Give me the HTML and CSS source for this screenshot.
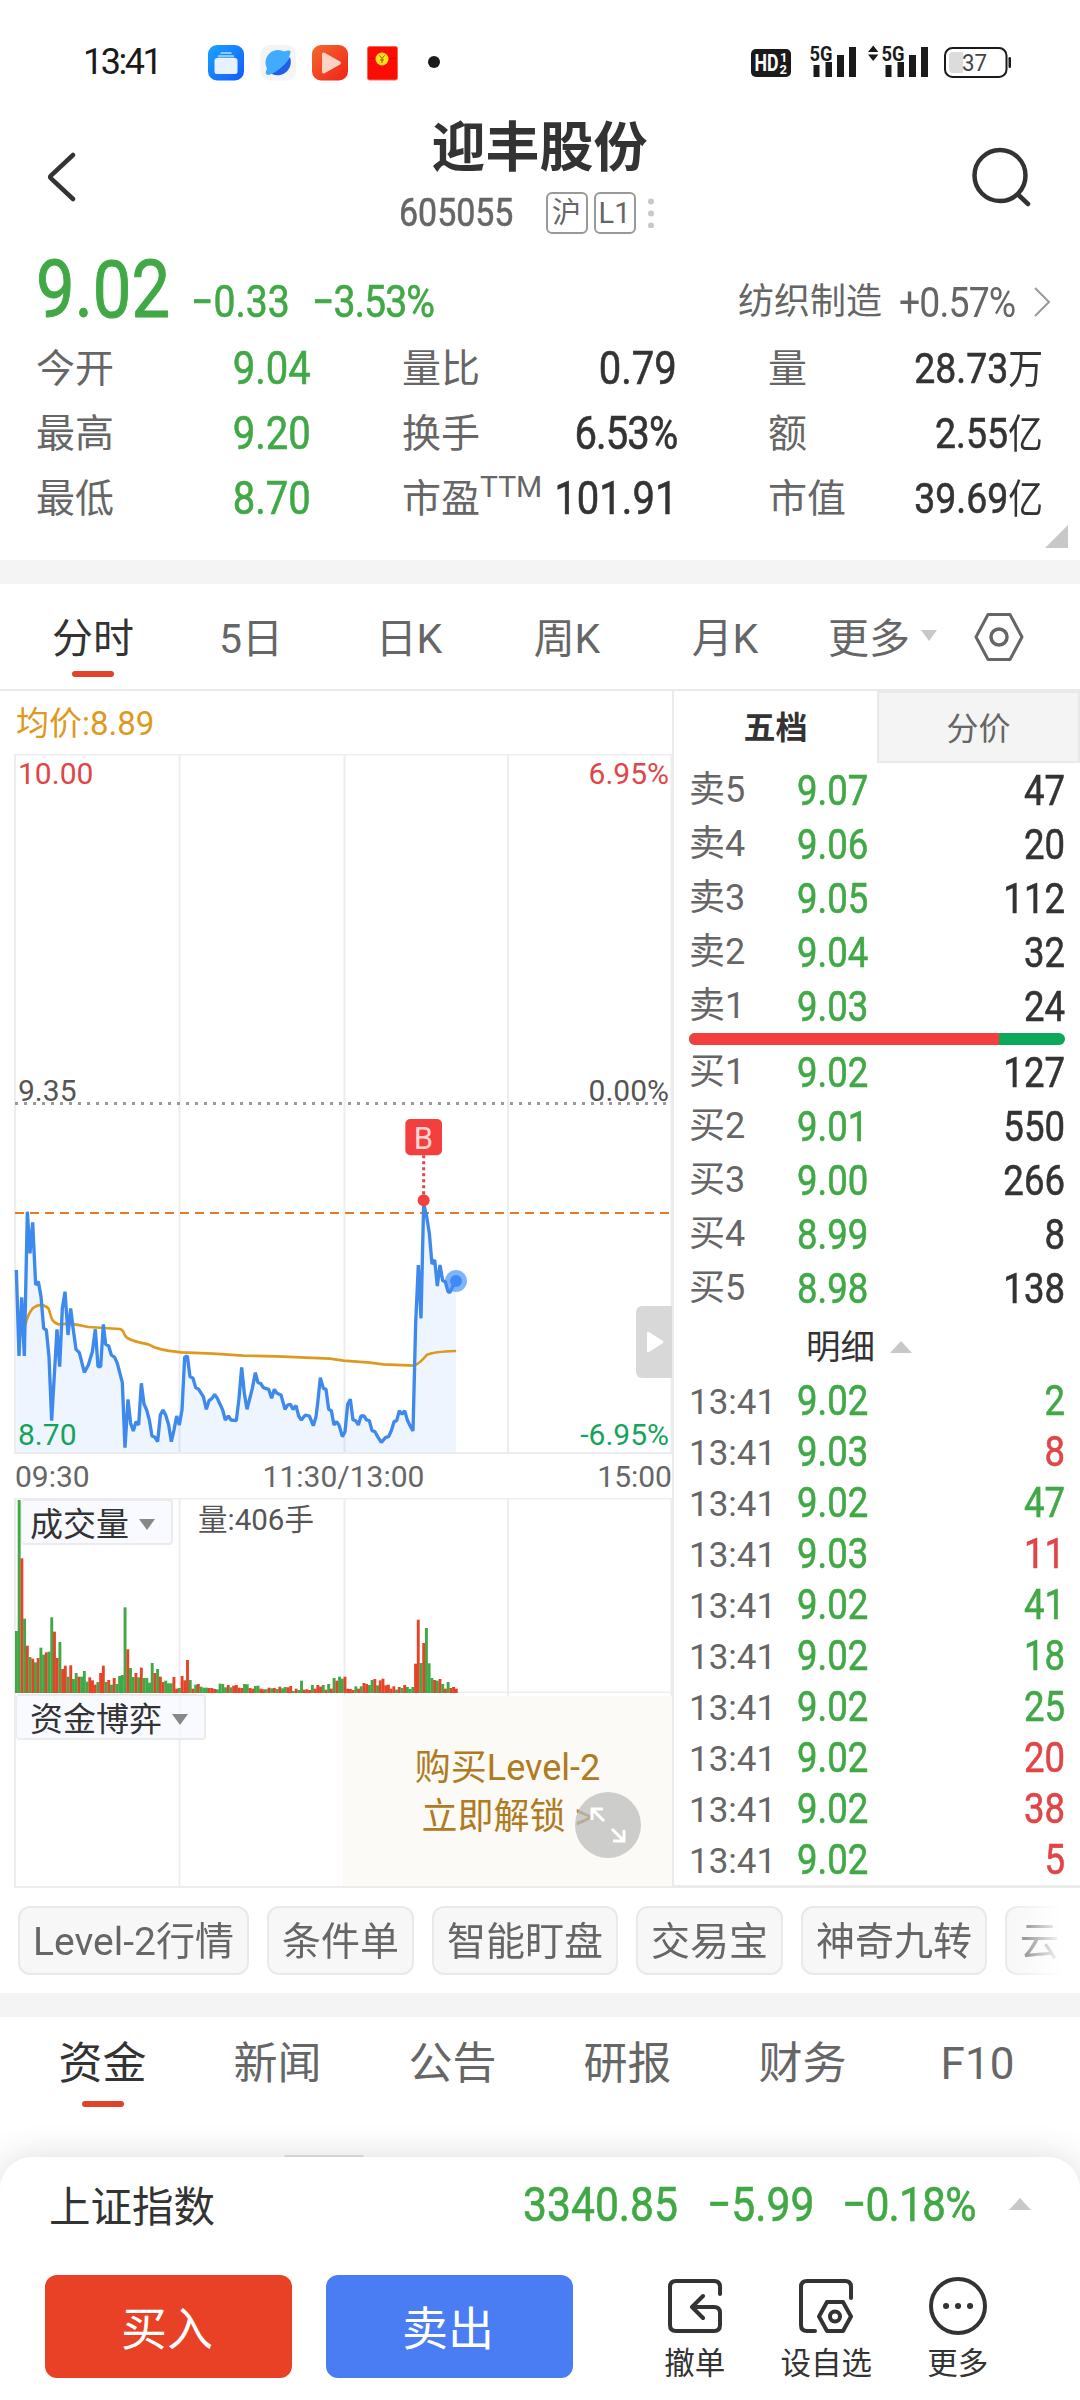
FILE: index.html
```html
<!DOCTYPE html>
<html lang="zh-CN">
  <head>
    <meta charset="UTF-8" />
    <meta name="viewport" content="width=device-width, initial-scale=1.0" />
    <title>迎丰股份 605055</title>
    <link rel="stylesheet" href="styles.css" />
  </head>
  <body>
    <!-- 状态栏 -->
    <div class="status-bar">
      <span class="clock">13:41</span>
      <svg class="app-icons" width="232" height="40" viewBox="208 42 232 40">
        <defs>
          <linearGradient id="blue" x1="0" y1="0" x2="1" y2="1">
            <stop offset="0" stop-color="#19a5ff" />
            <stop offset="1" stop-color="#1458ff" />
          </linearGradient>
          <linearGradient id="orange" x1="0" y1="0" x2="1" y2="1">
            <stop offset="0" stop-color="#f5692e" />
            <stop offset="1" stop-color="#f02218" />
          </linearGradient>
        </defs>
        <rect x="208" y="45" width="36" height="35.500" rx="9" fill="url(#blue)" />
        <path d="M221 52h10l1 2h-12zM218.500 55h15l1 2.500h-17z" fill="#8fc8ff" />
        <rect x="214.500" y="58" width="23" height="16" rx="2.500" fill="#e8f1ff" />
        <rect x="260.500" y="45" width="35.500" height="35.500" rx="9" fill="#f4f4f5" />
        <circle cx="278" cy="62.500" r="12.500" fill="#41acff" />
        <path d="M290 57c2 6 0 13-6 16.500-5 3-11 2-14-1 9-2 16-8 20-15.500z" fill="#205fe8" />
        <path d="M283 52c4-2 8-2 7.500 0-.5 8-13 21-22 23-4 0-3-4-1-7z" fill="#41acff" />
        <rect x="312" y="45" width="36" height="35.500" rx="9" fill="url(#orange)" />
        <path d="M322 54.500q0-3 3-1.500l15 8.500q2 1.500 0 3l-15 8.500q-3 1.500-3-1.500z" fill="#ffd2c8" />
        <rect x="367.500" y="46.500" width="30" height="33.500" rx="2" fill="#fb0d05" stroke="#f76b4c" />
        <path d="M369 58q13 3 27 0" fill="none" stroke="#d80000" />
        <circle cx="382" cy="59" r="6.500" fill="#ffe11b" />
        <path d="M379.500 55.500l2.500 3 2.500-3M382 58.500v4.500M380 60h4" fill="none" stroke="#a05a00" />
        <circle cx="434" cy="62" r="6" fill="#1a1a1a" />
      </svg>
      <svg class="sys-icons" width="262" height="40" viewBox="750 42 262 40" fill="#1a1a1a">
        <rect x="751" y="49" width="40" height="28" rx="5" />
        <text class="hd" x="754.500" y="71" textLength="24" lengthAdjust="spacingAndGlyphs">HD</text>
        <text class="hd-sub" x="780" y="61.500">1</text>
        <text class="hd-sub" x="779.500" y="74">2</text>
        <text class="net" x="809.500" y="60.500" textLength="23" lengthAdjust="spacingAndGlyphs">5G</text>
        <path d="M813.500 65h6v12h-6zM825.500 62h6.500v15h-6.500zM837 55h7v22h-7zM849 47h7v30h-7z" />
        <path d="M868 52l5.200-6.500 5.200 6.500zM868 54.500l5.200 6.500 5.200-6.500z" />
        <text class="net" x="881.500" y="60.500" textLength="23" lengthAdjust="spacingAndGlyphs">5G</text>
        <path d="M885.500 65h6v12h-6zM897.500 62h6.500v15h-6.500zM909 55h7v22h-7zM921 47h7v30h-7z" />
        <rect x="945" y="48" width="61.500" height="29" rx="7.500" fill="#fff" stroke="#1a1a1a" stroke-width="2" />
        <path d="M953 52h10v21h-10q-4 0-4-4v-13q0-4 4-4z" fill="#dcdcdc" />
        <rect x="1008.500" y="57" width="2.500" height="11" rx="1.200" />
        <text class="battery" x="962" y="71" textLength="25" lengthAdjust="spacingAndGlyphs">37</text>
      </svg>
    </div>

    <!-- 标题 -->
    <header class="header">
      <svg class="back" width="30" height="50" viewBox="0 0 30 50">
        <path d="M26 3L4 23.500q-1.500 1.500 0 3L26 47" />
      </svg>
      <div class="title">
        <h1>迎丰股份</h1>
        <div class="sub-title">
          <span class="num code">605055</span>
          <span class="badge">沪</span>
          <span class="badge">L1</span>
          <svg width="8" height="30" viewBox="0 0 8 30" fill="#c8c8c8">
            <circle cx="4" cy="3.500" r="3" />
            <circle cx="4" cy="15.500" r="3" />
            <circle cx="4" cy="27.500" r="3" />
          </svg>
        </div>
      </div>
      <svg class="search" width="60" height="60" viewBox="972 147 60 60">
        <circle cx="1001" cy="175.500" r="25.500" />
        <path d="M1019 194.500l10 9.500" />
      </svg>
    </header>

    <!-- 行情 -->
    <section class="quote">
      <div class="price-row">
        <span class="num price">9.02</span>
        <span class="num change">−0.33</span>
        <span class="num change percent">−3.53%</span>
        <div class="industry">
          纺织制造 <span class="num percent">+0.57%</span>
          <svg width="18" height="32" viewBox="0 0 18 32">
            <path d="M2 2l14 14L2 30" fill="none" stroke="#999" stroke-width="2" />
          </svg>
        </div>
      </div>
      <div class="stats">
        <div class="stat"><span>今开</span><b class="num green">9.04</b></div>
        <div class="stat"><span>量比</span><b class="num">0.79</b></div>
        <div class="stat last"><span>量</span><b class="num small">28.73<i>万</i></b></div>
        <div class="stat"><span>最高</span><b class="num green">9.20</b></div>
        <div class="stat"><span>换手</span><b class="num percent">6.53%</b></div>
        <div class="stat last"><span>额</span><b class="num small">2.55<i>亿</i></b></div>
        <div class="stat"><span>最低</span><b class="num green">8.70</b></div>
        <div class="stat"><span class="pe">市盈<sup>TTM</sup></span><b class="num">101.91</b></div>
        <div class="stat last"><span>市值</span><b class="num small">39.69<i>亿</i></b></div>
      </div>
      <div class="corner"></div>
    </section>

    <!-- 周期切换 -->
    <nav class="period-tabs">
      <span class="active">分时</span>
      <span>5日</span>
      <span>日K</span>
      <span>周K</span>
      <span>月K</span>
      <span class="more">更多<i class="arrow-down"></i></span>
      <svg width="50" height="50" viewBox="0 0 50 50" fill="none" stroke="#666" stroke-width="3">
        <path d="M14 2.500h22L48 25 36 47.500H14L2 25z" stroke-linejoin="round" />
        <circle cx="25" cy="25" r="8" stroke-width="3.500" />
      </svg>
    </nav>

    <main class="board">
      <section class="charts">
        <div class="average">均价:8.89</div>

        <!-- 分时图 -->
        <div class="price-chart">
          <svg width="672" height="700" viewBox="0 0 672 700">
            <g class="grid">
              <path d="M15 0v700M179.500 0v700M344.500 0v700M508 0v700M671.500 0v700M15 .5h657M15 699h657" />
            </g>
            <path d="M15 349.500h657" stroke="#999" stroke-width="3" stroke-dasharray="3 6" />
            <g transform="translate(0 326) scale(.33333)" fill="none">
              <path d="M49 1117V570L57 828 65 652 73 828 82 395 90 520 98 427 107 615 115 605 123 650 131 745 139 750 147 830 155 1022 171 748 179 860 187 685 195 635 204 765 212 685 220 750 228 808 238 818 253 877 265 855 277 815 286 748 294 860 302 860 310 733 317 793 326 798 334 825 344 832 352 850 367 908 375 1103 384 958 392 1030 400 1053 408 1025 416 1035 424 910 432 972 440 990 448 1020 456 1068 465 1072 473 1085 481 1005 489 990 497 1005 506 1035 514 1085 522 1050 530 1008 538 1035 546 990 554 832 562 828 570 890 579 895 587 923 596 928 610 950 619 988 627 962 636 955 644 943 652 955 668 990 676 1020 685 1008 693 1020 709 1022 717 955 725 862 733 940 741 988 757 925 766 878 774 908 782 910 790 923 806 928 815 955 823 928 831 940 843 945 855 988 863 975 871 973 879 988 888 977 896 1008 904 1020 916 1005 928 1008 940 1037 948 1010 953 970 961 893 970 925 978 928 986 988 994 992 1002 1035 1010 1025 1018 1038 1027 1070 1035 1055 1043 973 1051 958 1059 1020 1067 1022 1075 1035 1083 1008 1092 1008 1100 1020 1108 1022 1116 1052 1125 1055 1133 1070 1144 1087 1157 1072 1166 1070 1174 1052 1182 1025 1190 1022 1198 992 1206 1003 1214 992 1222 1020 1230 1037 1239 1053 1247 730 1255 555 1263 715 1271 370 1280 410 1288 460 1296 552 1304 540 1312 618 1320 555 1328 602 1336 605 1344 635 1350 637 1358 620 1368 603V1117z" fill="#3d8bf7" fill-opacity=".09" />
              <path d="M76 735Q82 705 98 685 122 665 145 685C155 705 148 722 175 733C210 728 235 735 265 741L360 747C377 753 368 766 382 774Q400 785 445 793C475 810 500 812 545 817L640 821 730 827 830 829 990 836 1030 842 1110 848 1150 853 1243 857Q1262 848 1280 825 1300 815 1368 813" stroke="#dd9920" stroke-width="8" />
              <path d="M45 399h1971" stroke="#e07b28" stroke-width="6" stroke-dasharray="27 18" />
              <path d="M49 570L57 828 65 652 73 828 82 395 90 520 98 427 107 615 115 605 123 650 131 745 139 750 147 830 155 1022 171 748 179 860 187 685 195 635 204 765 212 685 220 750 228 808 238 818 253 877 265 855 277 815 286 748 294 860 302 860 310 733 317 793 326 798 334 825 344 832 352 850 367 908 375 1103 384 958 392 1030 400 1053 408 1025 416 1035 424 910 432 972 440 990 448 1020 456 1068 465 1072 473 1085 481 1005 489 990 497 1005 506 1035 514 1085 522 1050 530 1008 538 1035 546 990 554 832 562 828 570 890 579 895 587 923 596 928 610 950 619 988 627 962 636 955 644 943 652 955 668 990 676 1020 685 1008 693 1020 709 1022 717 955 725 862 733 940 741 988 757 925 766 878 774 908 782 910 790 923 806 928 815 955 823 928 831 940 843 945 855 988 863 975 871 973 879 988 888 977 896 1008 904 1020 916 1005 928 1008 940 1037 948 1010 953 970 961 893 970 925 978 928 986 988 994 992 1002 1035 1010 1025 1018 1038 1027 1070 1035 1055 1043 973 1051 958 1059 1020 1067 1022 1075 1035 1083 1008 1092 1008 1100 1020 1108 1022 1116 1052 1125 1055 1133 1070 1144 1087 1157 1072 1166 1070 1174 1052 1182 1025 1190 1022 1198 992 1206 1003 1214 992 1222 1020 1230 1037 1239 1053 1247 730 1255 555 1263 715 1271 370 1280 410 1288 460 1296 552 1304 540 1312 618 1320 555 1328 602 1336 605 1344 635 1350 637 1358 620 1368 603" stroke="#3d89ec" stroke-width="10" stroke-linejoin="bevel" />
              <circle cx="1368" cy="603" r="33" fill="#3d8bf7" fill-opacity=".65" />
              <circle cx="1368" cy="603" r="18" fill="#3d8bf7" />
              <path d="M1271 226v120" stroke="#d9474d" stroke-width="9" stroke-dasharray="9 9" />
              <circle cx="1271" cy="361" r="18" fill="#f43f3f" />
              <rect x="1216" y="117" width="110" height="109" rx="15" fill="#f43f3f" />
            </g>
            <text class="mark" x="423.500" y="395" text-anchor="middle">B</text>
          </svg>
          <span class="axis top red">10.00</span>
          <span class="axis top right red">6.95%</span>
          <span class="axis middle">9.35</span>
          <span class="axis middle right">0.00%</span>
          <span class="axis bottom teal">8.70</span>
          <span class="axis bottom right teal">-6.95%</span>
          <span class="drawer">
            <svg width="18" height="24" viewBox="0 0 18 24"><path d="M1 3q0-2 2-1l14 9q1 1 0 2L3 22q-2 1-2-1z" fill="#fff" /></svg>
          </span>
        </div>
        <div class="times"><span>09:30</span><span>11:30/13:00</span><span>15:00</span></div>

        <!-- 成交量 -->
        <div class="volume">
          <svg id="volumeChart" width="672" height="195" viewBox="0 0 672 195">
            <path class="grid" d="M15 0v195M179.500 0v195M344.500 0v195M508 0v195M671.500 0v195M15 .5h657M15 194.500h657" />
          </svg>
          <div class="indicator">成交量<i class="arrow-down"></i></div>
          <span class="volume-value">量:406手</span>
        </div>

        <!-- 资金博弈 -->
        <div class="fund">
          <svg width="672" height="195" viewBox="0 0 672 195">
            <path class="grid" d="M15 0v195M179.500 0v195M344.500 0v195M508 0v195M671.500 0v195M15 194h657" />
          </svg>
          <div class="indicator">资金博弈<i class="arrow-down"></i></div>
          <div class="unlock"><p>购买Level-2</p><p>立即解锁 &gt;</p></div>
          <div class="expand">
            <svg width="36" height="36" viewBox="0 0 36 36" fill="none" stroke="#fff" stroke-width="3">
              <path d="M2 13V2h11M2 2l12 12M34 23v11H23M34 34L22 22" />
            </svg>
          </div>
        </div>
      </section>

      <!-- 五档盘口 -->
      <aside class="depth">
        <div class="depth-tabs"><b>五档</b><span>分价</span></div>
        <div class="orders">
          <div class="row"><span>卖5</span><b class="num green">9.07</b><b class="num count">47</b></div>
          <div class="row"><span>卖4</span><b class="num green">9.06</b><b class="num count">20</b></div>
          <div class="row"><span>卖3</span><b class="num green">9.05</b><b class="num count">112</b></div>
          <div class="row"><span>卖2</span><b class="num green">9.04</b><b class="num count">32</b></div>
          <div class="row"><span>卖1</span><b class="num green">9.03</b><b class="num count">24</b></div>
        </div>
        <div class="ratio"><i></i></div>
        <div class="orders buy">
          <div class="row"><span>买1</span><b class="num green">9.02</b><b class="num count">127</b></div>
          <div class="row"><span>买2</span><b class="num green">9.01</b><b class="num count">550</b></div>
          <div class="row"><span>买3</span><b class="num green">9.00</b><b class="num count">266</b></div>
          <div class="row"><span>买4</span><b class="num green">8.99</b><b class="num count">8</b></div>
          <div class="row"><span>买5</span><b class="num green">8.98</b><b class="num count">138</b></div>
        </div>
        <div class="detail-title">明细<i class="arrow-up"></i></div>
        <div class="details">
          <div class="row"><span>13:41</span><b class="num green">9.02</b><b class="num count green">2</b></div>
          <div class="row"><span>13:41</span><b class="num green">9.03</b><b class="num count red">8</b></div>
          <div class="row"><span>13:41</span><b class="num green">9.02</b><b class="num count green">47</b></div>
          <div class="row"><span>13:41</span><b class="num green">9.03</b><b class="num count red">11</b></div>
          <div class="row"><span>13:41</span><b class="num green">9.02</b><b class="num count green">41</b></div>
          <div class="row"><span>13:41</span><b class="num green">9.02</b><b class="num count green">18</b></div>
          <div class="row"><span>13:41</span><b class="num green">9.02</b><b class="num count green">25</b></div>
          <div class="row"><span>13:41</span><b class="num green">9.02</b><b class="num count red">20</b></div>
          <div class="row"><span>13:41</span><b class="num green">9.02</b><b class="num count red">38</b></div>
          <div class="row"><span>13:41</span><b class="num green">9.02</b><b class="num count red">5</b></div>
        </div>
      </aside>
    </main>

    <!-- 快捷功能 -->
    <div class="chips">
      <span>Level-2行情</span>
      <span>条件单</span>
      <span>智能盯盘</span>
      <span>交易宝</span>
      <span>神奇九转</span>
      <span>云参数</span>
    </div>

    <nav class="info-tabs">
      <span class="active">资金</span>
      <span>新闻</span>
      <span>公告</span>
      <span>研报</span>
      <span>财务</span>
      <span>F10</span>
    </nav>
    <div class="peek"></div>

    <!-- 底部交易栏 -->
    <footer class="trade-bar">
      <div class="index-row">
        <span class="index-name">上证指数</span>
        <span class="num">3340.85</span>
        <span class="num diff">−5.99</span>
        <span class="num rate percent">−0.18%</span>
        <i class="arrow-up"></i>
      </div>
      <div class="actions">
        <button class="buy-btn">买入</button>
        <button class="sell-btn">卖出</button>
        <div class="action">
          <svg width="58" height="58" viewBox="0 0 58 58">
            <path d="M54 17V10q0-6-6-6H10q-6 0-6 6v38q0 6 6 6h38q6 0 6-6V36q0-6-6-6H27M37 19L26 30l11 11" />
          </svg>
          撤单
        </div>
        <div class="action">
          <svg width="58" height="58" viewBox="0 0 58 58">
            <path d="M54 21V10q0-6-6-6H10q-6 0-6 6v38q0 6 6 6h8M30 25h16l8 14.500L46 54H30l-8-14.500z" />
            <circle cx="38" cy="39.500" r="5" />
          </svg>
          设自选
        </div>
        <div class="action">
          <svg width="58" height="58" viewBox="0 0 58 58">
            <circle cx="29" cy="29" r="27" />
            <path d="M17 29h.1M29 29h.1M41 29h.1" stroke-width="6" />
          </svg>
          更多
        </div>
      </div>
    </footer>

    <script>
      // 每分钟成交量：高度 + 颜色 (g 跌 / r 涨)
      const volumes =
        "186g 579g 404r 223g 142r 108g 103r 92g 105r 136g 115g 122r 124g 227g 184r 105r 153g 72r 82r 49g 83r 42g 60g 49r 49g 66g 34g 47r 38r 25r 33g 60r 82r 33g 39r 25g 45r 27g 51g 54g 257g 131r 75g 48g 60r 47g 76r 45g 45g 31g 90g 60r 72g 49r 33r 37g 29g 29g 48r 13r 15g 51r 38r 99r 39g 13r 25g 27r 19g 16g 16g 15r 15r 12r 11g 28g 27g 17g 24r 17g 22r 24r 16r 15r 27g 26g 15r 13r 21g 22g 13r 11r 11g 16r 14g 15r 12g 19r 14g 18g 17r 21r 6g 13r 9g 37g 10r 11r 9r 24g 13r 24r 19r 24g 10r 27g 13r 45g 37r 49g 43g 49r 13r 12r 9r 20g 13r 20g 30r 27r 24g 39g 42r 23g 38r 43r 23r 25r 13r 20r 10g 18r 15g 24r 18g 12g 18g 88r 220r 90g 150r 195g 89g 45g 39r 37g 42r 27g 13r 33g 15r 18r 13r".split(" ");
      const chart = document.querySelector("#volumeChart");

      volumes.forEach(function (item, i) {
        const height = parseInt(item) / 3;
        const bar = document.createElementNS("http://www.w3.org/2000/svg", "rect");
        bar.setAttribute("x", 15 + i * 2.715);
        bar.setAttribute("y", 195 - height);
        bar.setAttribute("width", 2.9);
        bar.setAttribute("height", height);
        bar.setAttribute("fill", item.endsWith("g") ? "#41a846" : "#e54428");
        chart.appendChild(bar);
      });
    </script>
  </body>
</html>
```
FILE: styles.css
```css
* {
  box-sizing: border-box;
}

body {
  margin: 0;
  width: 1080px;
  height: 2400px;
  overflow: hidden;
  background: #fff;
  color: #333;
  font-family: Roboto, "Noto Sans CJK SC", sans-serif;
  white-space: nowrap;
}

i {
  font-style: normal;
}

svg {
  display: block;
  flex-shrink: 0;
}

/* 窄体数字 */
.num {
  display: inline-block;
  font-weight: 400;
  -webkit-text-stroke: 0.6px currentColor;
  transform: scaleX(0.87);
  transform-origin: left center;
}

.num.percent {
  letter-spacing: -1px;
}

.green {
  color: #41a846;
}

.red {
  color: #e04548;
}

.teal {
  color: #16a35c;
}

.arrow-down,
.arrow-up {
  display: inline-block;
  border: 8px solid transparent;
  border-bottom-width: 0;
  border-top: 11px solid #c8c8c8;
}

.arrow-up {
  border: 11px solid transparent;
  border-top-width: 0;
  border-bottom: 12px solid #c8c8c8;
}

/* 状态栏 */
.status-bar {
  display: flex;
  align-items: center;
  height: 110px;
  padding: 14px 68px 0 83px;
  color: #1a1a1a;
}

.clock {
  width: 125px;
  padding-bottom: 1px;
  font-size: 36px;
  letter-spacing: -2.5px;
}

.sys-icons {
  margin-left: auto;
}

.hd {
  font-size: 23px;
  font-weight: 700;
  fill: #fff;
}

.hd-sub {
  font-size: 13px;
  font-weight: 700;
  fill: #fff;
}

.net {
  font-size: 21px;
  font-weight: 700;
}

.battery {
  font-size: 24px;
  fill: #444;
}

/* 标题 */
.header {
  display: flex;
  align-items: center;
  justify-content: space-between;
  height: 134px;
  padding: 0 49px 0 47px;
}

.back,
.search {
  fill: none;
  stroke: #333;
  stroke-width: 4.5;
  stroke-linecap: round;
}

.title {
  width: 290px;
  margin-left: 31px;
}

.title h1 {
  margin: 0;
  font-size: 54px;
  line-height: 72px;
  font-weight: 700;
  text-align: center;
}

.sub-title {
  display: flex;
  align-items: center;
  height: 56px;
  padding-left: 4px;
  color: #666;
}

.code {
  width: 147px;
  font-size: 39px;
}

.badge {
  width: 42px;
  height: 42px;
  margin-right: 6px;
  border: 2px solid #999;
  border-radius: 6px;
  font-size: 29px;
  line-height: 39px;
  text-align: center;
}

.sub-title svg {
  margin-left: 5px;
}

/* 行情 */
.quote {
  height: 316px;
  padding-left: 36px;
  position: relative;
}

.price-row {
  display: flex;
  align-items: baseline;
  height: 92px;
  line-height: 92px;
  color: #41a846;
}

.price {
  width: 155px;
  font-size: 79px;
  -webkit-text-stroke-width: 1px;
}

.change {
  width: 121px;
  font-size: 45px;
}

.industry {
  display: flex;
  align-items: center;
  align-self: flex-start;
  height: 92px;
  margin-left: auto;
  padding: 24px 29px 0 0;
  color: #666;
  font-size: 36px;
}

.industry .num {
  width: 134px;
  margin-left: 17px;
  font-size: 43px;
  -webkit-text-stroke-width: 0;
}

.stats {
  display: grid;
  grid-template-columns: 366px 366px 275px;
}

.stat {
  display: flex;
  justify-content: space-between;
  height: 65px;
  padding-right: 91px;
  font-size: 39px;
  line-height: 67px;
  color: #666;
}

.stat.last {
  padding-right: 0;
}

.stat .pe {
  margin-right: -40px;
}

.stat .num {
  color: #333;
  font-size: 46px;
  line-height: 65px;
  transform-origin: right center;
}

.stat .num.green {
  color: #41a846;
}

.stat .small {
  font-size: 43px;
}

.stat i {
  font-size: 40px;
  -webkit-text-stroke-width: 0;
}

.stat sup {
  font-size: 30px;
  line-height: 0;
  vertical-align: 15px;
}

.corner {
  position: absolute;
  right: 12px;
  bottom: 12px;
  border-left: 23px solid transparent;
  border-bottom: 23px solid #c8c8c8;
}

/* 周期切换 */
.period-tabs {
  display: flex;
  align-items: center;
  height: 131px;
  padding-left: 14px;
  border-top: 24px solid #f4f4f4;
  border-bottom: 2px solid #e9e9e9;
  color: #666;
  font-size: 41px;
}

.period-tabs span {
  position: relative;
  width: 158px;
  height: 105px;
  line-height: 110px;
  text-align: center;
}

.period-tabs .active,
.info-tabs .active {
  color: #333;
}

.active::after {
  content: "";
  position: absolute;
  left: 50%;
  bottom: 12px;
  width: 42px;
  height: 6px;
  margin-left: -21px;
  border-radius: 3px;
  background: #e0432a;
}

.period-tabs .more {
  width: 170px;
  padding-right: 13px;
}

.more .arrow-down {
  margin: 0 0 12px 11px;
}

/* 图表区 */
.board {
  display: flex;
  height: 1197px;
}

.charts {
  width: 672px;
}

.average {
  height: 63px;
  padding-left: 16px;
  color: #dd9920;
  font-size: 33px;
  line-height: 66px;
}

.grid {
  fill: none;
  stroke: #ededed;
  stroke-width: 2;
}

.price-chart,
.volume,
.fund {
  position: relative;
}

.mark {
  font-size: 31px;
  fill: #ffd6d6;
}

.axis {
  position: absolute;
  left: 18px;
  font-size: 30px;
  line-height: 36px;
}

.axis.right {
  left: auto;
  right: 3px;
}

.axis.top {
  top: 2px;
}

.axis.middle {
  top: 319px;
  color: #555;
}

.axis.bottom {
  bottom: 1px;
}

.drawer {
  position: absolute;
  right: 0;
  top: 552px;
  display: flex;
  align-items: center;
  width: 36px;
  height: 72px;
  padding-left: 10px;
  border-radius: 6px 0 0 6px;
  background: #d8d8d8;
}

.times {
  display: flex;
  justify-content: space-between;
  height: 44px;
  padding-left: 15px;
  color: #666;
  font-size: 30px;
  line-height: 46px;
}

.indicator {
  position: absolute;
  left: 16px;
  top: 1px;
  height: 46px;
  padding: 0 16px 0 13px;
  border: 2px solid #ebebeb;
  border-left-width: 1px;
  border-radius: 4px;
  background: rgba(247, 249, 255, 0.8);
  font-size: 33px;
  line-height: 47px;
}

.indicator .arrow-down {
  margin: 0 0 6px 10px;
  border-top-color: #888;
}

.volume .indicator {
  left: 21px;
  padding-left: 8px;
}

.volume-value {
  position: absolute;
  left: 198px;
  top: 0;
  color: #555;
  font-size: 29.500px;
  line-height: 44px;
}

.unlock {
  position: absolute;
  left: 343px;
  top: 3px;
  width: 329px;
  height: 190px;
  padding: 48px 22px 0;
  background: #fbfaf6;
  color: #b07a22;
  font-size: 36px;
  line-height: 49px;
  text-align: center;
}

.unlock p {
  margin: 0;
}

.expand {
  position: absolute;
  left: 575px;
  top: 99px;
  display: flex;
  align-items: center;
  justify-content: center;
  width: 66px;
  height: 66px;
  border-radius: 50%;
  background: rgba(190, 190, 190, 0.75);
}

/* 五档盘口 */
.depth {
  width: 408px;
  border-left: 2px solid #ebebeb;
  border-bottom: 3px solid #ebebeb;
}

.depth-tabs {
  display: flex;
  height: 72px;
  font-size: 32px;
  line-height: 72px;
  text-align: center;
}

.depth-tabs b {
  width: 203px;
  line-height: 75px;
}

.depth-tabs span {
  width: 203px;
  border: 2px solid #e9e9e9;
  background: #f4f4f4;
  color: #666;
}

.row {
  display: grid;
  grid-template-columns: 108px 1fr 1fr;
  height: 54px;
  padding: 0 15px;
  color: #666;
  font-size: 36px;
  line-height: 55px;
}

.row .num {
  font-size: 43px;
  line-height: 54px;
  transform: scaleX(0.85);
}

.row .count {
  text-align: right;
  transform-origin: right center;
}

.count:not(.green):not(.red) {
  color: #333;
}

.ratio {
  height: 12px;
  margin: 0 15px;
  border-radius: 6px;
  background: #0ba85a;
  overflow: hidden;
}

.ratio i {
  display: block;
  width: 310px;
  height: 12px;
  background: #f43f3f;
}

.buy {
  height: 271px;
}

.detail-title {
  height: 59px;
  padding-left: 132px;
  font-size: 34.500px;
  line-height: 62px;
}

.detail-title .arrow-up {
  margin: 0 0 6px 15px;
}

.details .row {
  height: 51px;
  font-size: 35px;
  line-height: 55px;
}

.details .row .num {
  line-height: 51px;
}

/* 快捷功能 */
.chips {
  display: flex;
  gap: 18px;
  width: 1063px;
  height: 105px;
  padding: 18px 0 0 18px;
  overflow: hidden;
  -webkit-mask-image: linear-gradient(to right, #000 1005px, transparent 1063px);
  mask-image: linear-gradient(to right, #000 1005px, transparent 1063px);
}

.chips span {
  flex-shrink: 0;
  height: 69px;
  padding: 0 13px;
  border: 2px solid #e9e9e9;
  border-radius: 12px;
  background: #f7f7f7;
  color: #666;
  font-size: 39px;
  line-height: 68px;
}

.info-tabs {
  display: flex;
  height: 138px;
  padding: 0 15px;
  border-top: 24px solid #f4f4f4;
  color: #666;
  font-size: 44px;
}

.info-tabs span {
  position: relative;
  width: 175px;
  line-height: 95px;
  text-align: center;
}

.info-tabs .active::after {
  bottom: 24px;
}

.peek {
  width: 80px;
  height: 2px;
  margin: 24px 0 0 284px;
  border-radius: 6px 6px 0 0;
  background: #e2e2e2;
}

/* 底部交易栏 */
.trade-bar {
  position: relative;
  height: 243px;
  border-radius: 32px 32px 0 0;
  background: #fff;
  box-shadow: 0 0 36px rgba(0, 0, 0, 0.14);
}

.index-row {
  display: flex;
  align-items: center;
  height: 94px;
  padding-left: 49px;
  color: #41a846;
}

.index-name {
  width: 474px;
  color: #333;
  font-size: 41.500px;
}

.index-row .num {
  width: 184px;
  font-size: 49px;
}

.index-row .diff {
  width: 135px;
}

.index-row .rate {
  width: 167px;
}

.actions {
  display: flex;
  padding: 24px 0 0 45px;
}

.actions button {
  width: 247px;
  height: 103px;
  margin-right: 34px;
  padding: 0 3px 4px 0;
  border: none;
  border-radius: 12px;
  color: #fff;
  font-family: inherit;
  font-size: 46px;
}

.buy-btn {
  background: #e84125;
}

.actions .sell-btn {
  margin-right: 56px;
  background: #4a7df3;
}

.action {
  display: flex;
  flex-direction: column;
  align-items: center;
  width: 131.500px;
  padding-top: 2px;
  font-size: 30.500px;
  line-height: 46px;
}

.action svg {
  margin-bottom: 6px;
  fill: none;
  stroke: #333;
  stroke-width: 4;
  stroke-linecap: round;
  stroke-linejoin: round;
}
```
